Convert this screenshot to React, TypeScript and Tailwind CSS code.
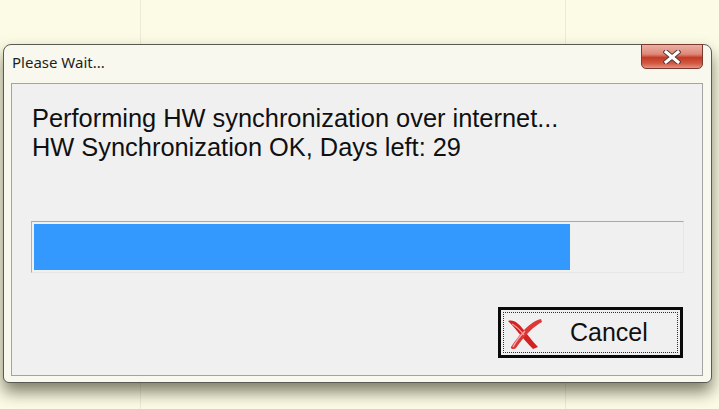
import React from "react";

function CloseGlyph() {
  return (
    <svg width="18" height="14" viewBox="0 0 18 14">
      <path d="M3 2 L15 12 M15 2 L3 12" stroke="#5a3a3a" strokeWidth="5" strokeLinecap="square" />
      <path d="M3 2 L15 12 M15 2 L3 12" stroke="#ffffff" strokeWidth="3" strokeLinecap="square" />
    </svg>
  );
}

function CancelIcon() {
  return (
    <svg width="38" height="34" viewBox="0 0 38 34">
      {/* brush-style red cross */}
      <path
        d="M2 5 C 8 3, 13 8, 17 13 C 22 19, 26 25, 32 31 L 27 33 C 21 27, 16 21, 11 15 C 8 11, 5 8, 2 5 Z"
        fill="#d42222"
      />
      <path
        d="M35 3 C 30 4, 24 8, 19 13 C 14 18, 9 25, 5 31 C 4 33, 8 34, 10 32 C 14 26, 18 21, 23 16 C 28 11, 32 8, 36 6 Z"
        fill="#dc3838"
      />
      <path d="M7 31 C 10 25, 14 20, 19 15" stroke="#f3a6a6" strokeWidth="1.4" fill="none" />
      <path d="M6 8 C 10 10, 14 14, 18 19" stroke="#f0a0a0" strokeWidth="1.2" fill="none" />
    </svg>
  );
}

export default function App() {
  return (
    <div className="relative w-[719px] h-[409px] overflow-hidden bg-[#fcfce6] pt-[44px] pl-[3px] font-['Liberation_Sans',Arial,sans-serif]">
      {/* faint background grid lines */}
      <div className="absolute left-[140px] top-0 h-full w-px bg-[#ecebd2]" />
      <div className="absolute left-[565px] top-0 h-full w-px bg-[#ecebd2]" />

      {/* Window */}
      <div className="relative flex flex-col w-[709px] h-[339px] rounded-t-[8px] rounded-b-[6px] border border-[#5a5a52] bg-[#f8f8ee] shadow-[0_9px_16px_rgba(40,40,20,0.6)]">
        {/* Title bar */}
        <div className="relative flex h-[38px] items-start">
          <span className="mt-[8px] ml-[8px] text-[15px] leading-[18px] text-[#1e1e1e] font-['Noto_Sans','Liberation_Sans',sans-serif]">
            Please Wait...
          </span>
          <div className="absolute right-[8px] top-[-1px] flex h-[25px] w-[62px] items-center justify-center rounded-b-[5px] border border-[#7a3a30] bg-[linear-gradient(to_bottom,#eab0a4_0%,#de8878_40%,#c43a26_55%,#d25a44_80%,#e6907e_100%)]">
            <CloseGlyph />
          </div>
        </div>

        {/* Client area */}
        <div className="ml-[7px] flex h-[293px] w-[692px] flex-col border border-[#a3a3a3] bg-[#f0f0f0] px-[19px]">
          <div className="mt-[20px] pl-[1px] text-[25.4px] leading-[29px] text-[#101010]">
            <div>Performing HW synchronization over internet...</div>
            <div>HW Synchronization OK, Days left: 29</div>
          </div>

          {/* Progress bar */}
          <div className="mt-[59px] h-[52px] w-[653px] border border-t-[#a8a8a8] border-l-[#b0b0b0] border-r-[#e6e6e6] border-b-[#e6e6e6] bg-[#f0f0f0] p-[2px]">
            <div className="h-full w-[536px] bg-[#3399ff]" />
          </div>

          {/* Button row */}
          <div className="mt-[34px] flex justify-end">
            <button className="flex h-[51px] w-[185px] items-stretch border-[3px] border-[#0a0a0a] bg-[#f0f0f0] p-[2px]">
              <div className="flex flex-1 items-center border border-dotted border-[#303030] pl-[2px]">
                <CancelIcon />
                <span className="ml-[26px] text-[25px] leading-none text-[#101010]">Cancel</span>
              </div>
            </button>
          </div>
        </div>
      </div>
    </div>
  );
}
